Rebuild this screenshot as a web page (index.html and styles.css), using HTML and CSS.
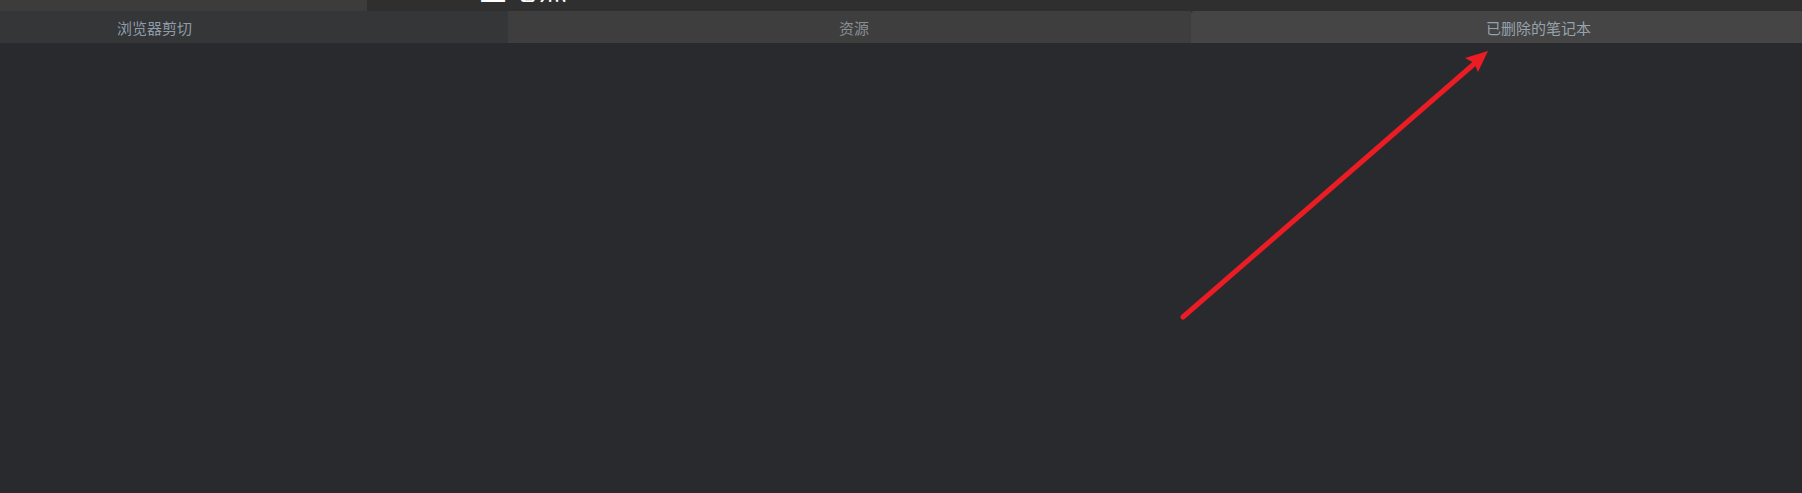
FILE: index.html
```html
<!DOCTYPE html>
<html lang="zh-CN">
<head>
<meta charset="utf-8">
<title>笔记</title>
<link rel="stylesheet" href="styles.css">
</head>
<body>
<div class="app">
  <div class="topbar">
    <div class="topbar-left"></div>
    <div class="topbar-right">
      <div class="title">全笔点</div>
    </div>
  </div>
  <div class="tabs">
    <div class="tab tab-clip">浏览器剪切</div>
    <div class="tab tab-res">资源</div>
    <div class="tab tab-trash">已删除的笔记本</div>
  </div>
  <div class="content"></div>
  <svg class="arrow" width="1802" height="493" viewBox="0 0 1802 493">
    <line x1="1183" y1="317" x2="1474" y2="64" stroke="#ec1c24" stroke-width="5" stroke-linecap="round"/>
    <polygon points="1488,51 1465,58 1474,63 1478,72" fill="#ec1c24"/>
  </svg>
</div>
</body>
</html>
```

FILE: styles.css
```css
html, body {
  margin: 0;
  padding: 0;
  background: #292a2e;
}

.app {
  position: relative;
  width: 1802px;
  height: 493px;
  overflow: hidden;
  font-family: "Noto Sans CJK SC", "Noto Sans", sans-serif;
}

.topbar {
  display: flex;
  height: 11px;
  overflow: hidden;
}

.topbar-left {
  width: 367px;
  background: #3c3c3c;
}

.topbar-right {
  flex: 1;
  background: #2f2f2f;
  padding-left: 112px;
  overflow: hidden;
}

.title {
  margin-top: -26px;
  height: 28px;
  font-size: 28px;
  line-height: 28px;
  color: #ffffff;
  letter-spacing: 2px;
  white-space: nowrap;
}

.tabs {
  display: flex;
  height: 32px;
}

.tab {
  display: flex;
  align-items: center;
  font-size: 15px;
  white-space: nowrap;
  box-sizing: border-box;
}

.tab-clip {
  width: 508px;
  padding-left: 117px;
  background: #353638;
  color: #8e9ca8;
}

.tab-res {
  width: 683px;
  padding-left: 331px;
  background: #3e3e3e;
  color: #8a8e92;
}

.tab-trash {
  flex: 1;
  padding-left: 295px;
  background: #454545;
  color: #97a3ac;
  border-top-left-radius: 3px;
}

.content {
  height: 450px;
  background: #292a2e;
}

.arrow {
  position: absolute;
  left: 0;
  top: 0;
  pointer-events: none;
}
```
